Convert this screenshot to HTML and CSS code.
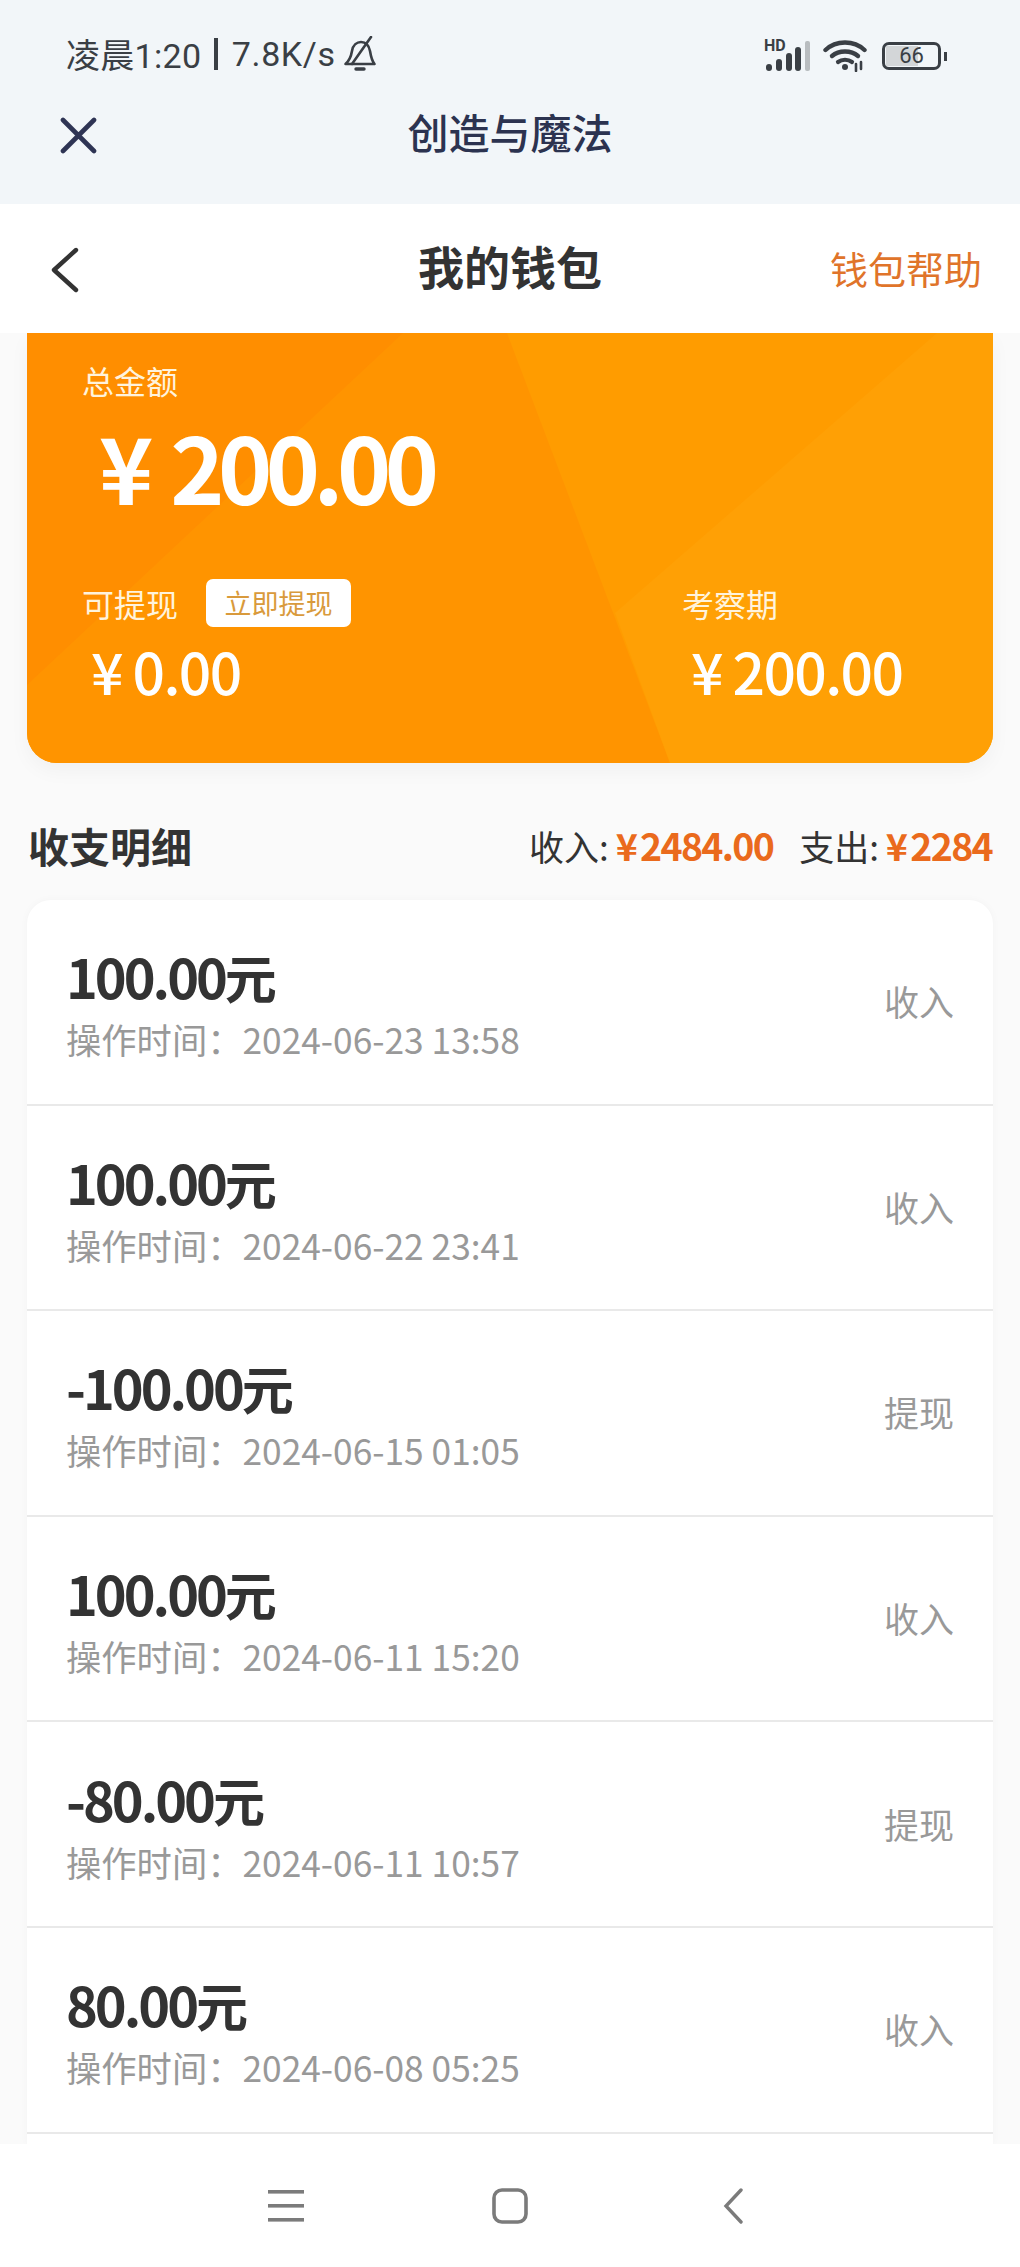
FILE: index.html
```html
<!DOCTYPE html>
<html lang="zh-CN">
<head>
<meta charset="utf-8">
<title>我的钱包</title>
<link rel="stylesheet" href="styles.css">
</head>
<body>
<div class="page">
  <header class="top">
    <div class="status">
      <div class="status-left">
        <span class="clock">凌晨1:20</span><i class="sep"></i><span class="speed">7.8K/s</span>
        <svg class="bell" width="32" height="36" viewBox="0 0 32 36" fill="none" stroke="#3a3f45" stroke-width="2.6" stroke-linecap="round" stroke-linejoin="round"><path d="M1.5 28 C5 25 7 21 8 15 C9 9 13 6 17 6 C22 6 25 10 26 15 C27 21 28 25 30.5 28 Z"/><path d="M27 1 L8 28"/><path d="M12 33 H20" stroke-width="3.4"/></svg>
      </div>
      <div class="status-right">
        <div class="signal">
          <span class="hd">HD</span>
          <svg width="46" height="30" viewBox="0 0 46 30"><g fill="#3a3f45"><rect x="2" y="23" width="6" height="7" rx="3"/><rect x="12" y="18" width="6" height="12" rx="3"/><rect x="22" y="12" width="6" height="18" rx="3"/><rect x="31" y="6" width="6" height="24" rx="3"/></g><rect x="41" y="0" width="5" height="30" rx="2" fill="#b9bdc0"/></svg>
        </div>
        <svg class="wifi" width="44" height="32" viewBox="0 0 44 32" fill="none" stroke="#3a3f45" stroke-linecap="round"><path d="M2.5 10 C13 0 31 0 41.5 10" stroke-width="4.4"/><path d="M9 16 C16 10 28 10 35 16" stroke-width="4.4"/><path d="M15 22 C19 19 25 19 29 22" stroke-width="4.2"/><circle cx="22" cy="27" r="3" fill="#3a3f45" stroke="none"/><path d="M33 24 V31 M38 22 V29" stroke-width="2.6"/></svg>
        <div class="battery-wrap">
          <div class="battery"><i class="level"></i><span class="pct">66</span></div>
          <i class="nub"></i>
        </div>
      </div>
    </div>
    <div class="webbar">
      <svg class="close" width="37" height="37" viewBox="0 0 37 37" fill="none" stroke="#2e3454" stroke-width="4.6" stroke-linecap="round"><path d="M3 3 L34 34 M34 3 L3 34"/></svg>
      <h1 class="webtitle">创造与魔法</h1>
    </div>
  </header>
  <nav class="nav">
    <svg class="back" width="30" height="46" viewBox="0 0 30 46" fill="none" stroke="#333" stroke-width="4.4" stroke-linecap="round" stroke-linejoin="round"><path d="M26 3 L4 23 L26 43"/></svg>
    <h2 class="navtitle">我的钱包</h2>
    <a class="help">钱包帮助</a>
  </nav>
  <main class="main">
    <section class="wallet">
      <svg class="wallet-bg" viewBox="0 0 966 430" preserveAspectRatio="none"><polygon points="0,0 480,0 643,430 0,430" fill="#ff9400"/><polygon points="0,0 376,0 0,352" fill="#ff8e00"/><polygon points="910,0 966,0 966,430 643,430 588,280" fill="#ffa005"/></svg>
      <div class="wallet-label">总金额</div>
      <div class="wallet-total"><span class="yen">¥</span>200.00</div>
      <div class="wallet-cols">
        <div class="col">
          <div class="col-head"><span class="wallet-label">可提现</span><button class="cash">立即提现</button></div>
          <div class="col-num"><span class="yen">¥</span>0.00</div>
        </div>
        <div class="col">
          <div class="col-head"><span class="wallet-label">考察期</span></div>
          <div class="col-num"><span class="yen">¥</span>200.00</div>
        </div>
      </div>
    </section>
    <div class="summary">
      <h3 class="summary-title">收支明细</h3>
      <div class="summary-nums">
        <span>收入:<b><span class="yen">¥</span>2484.00</b></span>
        <span>支出:<b><span class="yen">¥</span>2284</b></span>
      </div>
    </div>
    <section class="list">
      <div class="row"><div class="row-main"><div class="amt">100.00<span class="unit">元</span></div><div class="time">操作时间：2024-06-23 13:58</div></div><div class="kind">收入</div></div>
      <div class="row"><div class="row-main"><div class="amt">100.00<span class="unit">元</span></div><div class="time">操作时间：2024-06-22 23:41</div></div><div class="kind">收入</div></div>
      <div class="row"><div class="row-main"><div class="amt">-100.00<span class="unit">元</span></div><div class="time">操作时间：2024-06-15 01:05</div></div><div class="kind">提现</div></div>
      <div class="row"><div class="row-main"><div class="amt">100.00<span class="unit">元</span></div><div class="time">操作时间：2024-06-11 15:20</div></div><div class="kind">收入</div></div>
      <div class="row"><div class="row-main"><div class="amt">-80.00<span class="unit">元</span></div><div class="time">操作时间：2024-06-11 10:57</div></div><div class="kind">提现</div></div>
      <div class="row"><div class="row-main"><div class="amt">80.00<span class="unit">元</span></div><div class="time">操作时间：2024-06-08 05:25</div></div><div class="kind">收入</div></div>
      <div class="row-stub"></div>
    </section>
  </main>
  <footer class="sysnav">
    <svg width="36" height="34" viewBox="0 0 36 34" fill="#7b7b7b"><rect x="0" y="1" width="36" height="3.6"/><rect x="0" y="15" width="36" height="3.6"/><rect x="0" y="29" width="36" height="3.6"/></svg>
    <svg class="sys-home" width="36" height="36" viewBox="0 0 36 36" fill="none" stroke="#7b7b7b" stroke-width="3.6"><rect x="2" y="2" width="32" height="32" rx="8"/></svg>
    <svg class="sys-back" width="20" height="36" viewBox="0 0 20 36" fill="none" stroke="#7b7b7b" stroke-width="3.4" stroke-linecap="round"><path d="M18 2 L3 18 L18 34"/></svg>
  </footer>
</div>
</body>
</html>
```

FILE: styles.css
```css
* { box-sizing: border-box; }
html, body { margin: 0; padding: 0; }
body { font-family: "Noto Sans CJK SC", "Noto Sans", sans-serif; color: #333; background: #fafafa; }
.page { width: 1020px; height: 2267px; display: flex; flex-direction: column; overflow: hidden; }

.top { height: 204px; background: #f2f6f9; flex: none; }
.status { height: 100px; padding: 12px 73px 0 66px; display: flex; justify-content: space-between; align-items: center; }
.status-left { display: flex; align-items: center; margin-bottom: 5px; font-family: Roboto, "Noto Sans CJK SC", sans-serif; font-size: 34px; color: #3a3f45; }
.clock { letter-spacing: .3px; }
.speed { letter-spacing: .6px; }
.sep { width: 3.5px; height: 32px; background: #3a3f45; margin: 0 14px 0 13px; }
.bell { margin-left: 8px; }
.status-right { display: flex; align-items: center; gap: 13px; }
.signal { position: relative; width: 46px; height: 30px; }
.signal svg { display: block; }
.hd { position: absolute; left: 0; top: -3px; font: 700 16px/16px Roboto, sans-serif; color: #3a3f45; }
.battery-wrap { display: flex; align-items: center; gap: 3px; margin-left: 2px; }
.battery { position: relative; width: 59px; height: 28px; border: 3.5px solid #3a3f45; border-radius: 7px; display: flex; align-items: center; justify-content: center; }
.level { position: absolute; left: 1px; top: 1px; bottom: 1px; width: 32px; background: #d3d6d8; }
.pct { position: relative; font: 400 22px/1 Roboto, sans-serif; color: #3a3f45; }
.nub { width: 3px; height: 9px; background: #3a3f45; }

.webbar { position: relative; height: 104px; display: flex; align-items: center; justify-content: center; padding-bottom: 42px; }
.close { position: absolute; left: 60px; top: 17px; }
.webtitle { margin: 0; font-size: 41px; font-weight: 500; line-height: 60px; color: #2c3350; }

.nav { flex: none; position: relative; height: 129px; background: #fff; display: flex; align-items: center; justify-content: center; padding-bottom: 8px; }
.back { position: absolute; left: 50px; top: 43px; }
.navtitle { margin: 0; font-size: 46px; font-weight: 700; color: #333; }
.help { position: absolute; right: 38px; top: 37px; font-size: 38px; line-height: 54px; color: #e0742a; }

.main { flex: 1; min-height: 0; padding: 0 27px; overflow: hidden; display: flex; flex-direction: column; }
.wallet { position: relative; flex: none; height: 430px; padding: 25px 0 0 55px; background: #ff9c00; border-radius: 0 0 30px 30px; overflow: hidden; box-shadow: 0 8px 20px rgba(0,0,0,.04); color: #fff; }
.wallet-bg { position: absolute; left: 0; top: 0; width: 100%; height: 100%; }
.wallet > *:not(.wallet-bg) { position: relative; }
.wallet-label { font-size: 32px; line-height: 44px; color: #fff3dc; }
.wallet-total { margin: 3px 0 0 17px; font-size: 92px; font-weight: 700; line-height: 120px; letter-spacing: -6.5px; display: flex; align-items: baseline; }
.wallet-total .yen { margin-right: 17px; letter-spacing: 0; }
.wallet-cols { display: grid; grid-template-columns: 600px 1fr; margin-top: 54px; }
.col-head { height: 48px; display: flex; align-items: center; gap: 28px; }
.cash { width: 145px; height: 48px; padding: 0; border: 0; border-radius: 7px; background: #fff; font: 400 27px/48px "Noto Sans CJK SC", sans-serif; color: #d99a3c; }
.col-num { margin: 7px 0 0 9px; font-size: 57px; font-weight: 500; line-height: 72px; letter-spacing: -1.6px; display: flex; align-items: baseline; }
.col-num .yen { margin-right: 9px; letter-spacing: 0; }

.summary { flex: none; height: 137px; display: flex; align-items: center; justify-content: space-between; padding: 26px 1px 0 0; }
.summary-title { margin: 0 0 0 1px; font-size: 41px; font-weight: 700; color: #333; }
.summary-nums { display: flex; gap: 26px; font-size: 35px; color: #333; }
.summary-nums b { font-weight: 700; font-size: 37.5px; letter-spacing: -1.7px; color: #ea6a1c; margin-left: 7px; }
.summary-nums .yen { margin-right: 4px; }

.list { flex: 1; min-height: 0; overflow: hidden; background: #fff; border-radius: 24px 24px 0 0; box-shadow: 0 0 8px rgba(0,0,0,.03); }
.row { height: 205.6px; padding: 4px 39px 0 39px; border-bottom: 2px solid #e9e9e9; display: flex; align-items: center; justify-content: space-between; }
.amt { font-size: 54px; font-weight: 700; line-height: 66px; letter-spacing: -3px; color: #333; }
.unit { letter-spacing: 0; font-size: 52px; }
.time { margin-top: 4px; font-size: 35.3px; line-height: 50px; color: #999; }
.kind { margin-bottom: 5px; font-size: 35px; line-height: 48px; color: #999; }
.row-stub { height: 20px; margin: 11px 32px 0; border-top: 2px solid #eee; }

.sysnav { flex: none; height: 123px; background: #fff; display: flex; align-items: center; padding: 0 0 0 268px; }
.sys-home { margin-left: 188px; }
.sys-back { margin-left: 195px; }
```
